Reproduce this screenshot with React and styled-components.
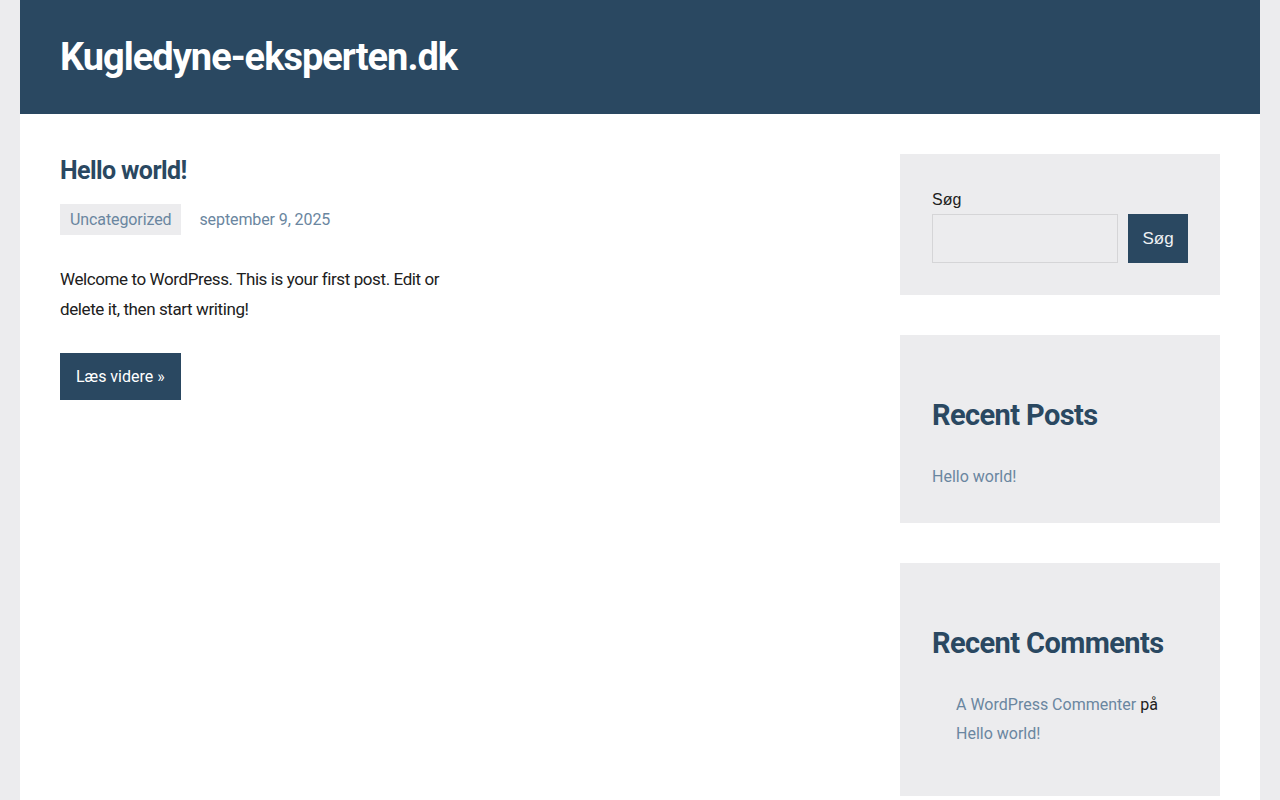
import styled, { createGlobalStyle } from 'styled-components'

const GlobalStyle = createGlobalStyle`
    body {
        margin: 0;
        background: #ececee;
        font-family: Roboto, "Noto Sans", sans-serif;
        color: #202020;
    }
    * {
        box-sizing: border-box;
    }
`

const Page = styled.div`
    max-width: 1240px;
    margin: 0 auto;
    background: #ffffff;
    min-height: 100vh;
`

const Header = styled.header`
    height: 114px;
    background: #2a4861;
    padding: 0 40px;
    display: flex;
    align-items: center;
`

const SiteTitle = styled.a`
    font-size: 38px;
    font-weight: 700;
    color: #ffffff;
    text-decoration: none;
    letter-spacing: -1px;
`

const Content = styled.div`
    display: flex;
    gap: 40px;
    padding: 40px;
`

const Main = styled.main`
    flex: 1;
    display: grid;
    grid-template-columns: 1fr 1fr;
    column-gap: 20px;
    align-content: start;
`

const Post = styled.article``

const PostTitle = styled.h2`
    margin: 0;
    font-size: 25px;
    line-height: 34px;
    font-weight: 700;
    color: #2a4861;
    letter-spacing: -0.6px;
`

const Meta = styled.div`
    display: flex;
    align-items: center;
    gap: 18px;
    margin-top: 16px;
    font-size: 16px;
    letter-spacing: -0.1px;
`

const Badge = styled.a`
    background: #ececee;
    color: #6a86a0;
    padding: 0 10px;
    line-height: 31px;
    text-decoration: none;
`

const MetaLink = styled.a`
    color: #6a86a0;
    text-decoration: none;
`

const Excerpt = styled.p`
    margin: 29px 0 29px;
    font-size: 17px;
    line-height: 30px;
    letter-spacing: -0.4px;
`

const Button = styled.a`
    display: inline-flex;
    align-items: center;
    height: 47px;
    padding: 0 16px;
    background: #2a4861;
    color: #ffffff;
    font-size: 16px;
    text-decoration: none;
`

const Sidebar = styled.aside`
    width: 320px;
    flex-shrink: 0;
    display: flex;
    flex-direction: column;
    gap: 40px;
`

const Widget = styled.section`
    background: #ececee;
    padding: 32px;
`

const SearchLabel = styled.label`
    display: block;
    font-family: "Liberation Sans", Arial, sans-serif;
    font-size: 16px;
    line-height: 28px;
    color: #202020;
`

const SearchRow = styled.div`
    display: flex;
    gap: 10px;
`

const SearchInput = styled.input`
    flex: 1;
    min-width: 0;
    height: 49px;
    border: 1px solid #d5d5d7;
    background: transparent;
`

const SearchButton = styled.button`
    width: 60px;
    height: 49px;
    border: none;
    background: #2a4861;
    color: #eef1f4;
    font-family: "Liberation Sans", Arial, sans-serif;
    font-size: 17px;
`

const WidgetTitle = styled.h3`
    margin: 29px 0 27px;
    font-size: 29px;
    line-height: 39px;
    font-weight: 700;
    color: #2a4861;
    letter-spacing: -0.6px;
`

const List = styled.ul`
    margin: 0 0 ${({ indent }) => (indent ? '16px' : '0')};
    padding-left: ${({ indent }) => (indent ? '24px' : '0')};
    list-style: none;
    font-size: 16px;
    line-height: 29px;
`

const Link = styled.a`
    color: #6a86a0;
    text-decoration: none;
`

export default function App() {
    return (
        <>
            <GlobalStyle />
            <Page>
                <Header>
                    <SiteTitle href="#">Kugledyne-eksperten.dk</SiteTitle>
                </Header>
                <Content>
                    <Main>
                        <Post>
                            <PostTitle>Hello world!</PostTitle>
                            <Meta>
                                <Badge href="#">Uncategorized</Badge>
                                <MetaLink href="#">september 9, 2025</MetaLink>
                            </Meta>
                            <Excerpt>
                                Welcome to WordPress. This is your first post. Edit or delete it, then start writing!
                            </Excerpt>
                            <Button href="#">Læs videre »</Button>
                        </Post>
                    </Main>
                    <Sidebar>
                        <Widget>
                            <SearchLabel htmlFor="s">Søg</SearchLabel>
                            <SearchRow>
                                <SearchInput id="s" type="search" />
                                <SearchButton>Søg</SearchButton>
                            </SearchRow>
                        </Widget>
                        <Widget>
                            <WidgetTitle>Recent Posts</WidgetTitle>
                            <List>
                                <li>
                                    <Link href="#">Hello world!</Link>
                                </li>
                            </List>
                        </Widget>
                        <Widget>
                            <WidgetTitle>Recent Comments</WidgetTitle>
                            <List indent>
                                <li>
                                    <Link href="#">A WordPress Commenter</Link> på <Link href="#">Hello world!</Link>
                                </li>
                            </List>
                        </Widget>
                    </Sidebar>
                </Content>
            </Page>
        </>
    )
}
